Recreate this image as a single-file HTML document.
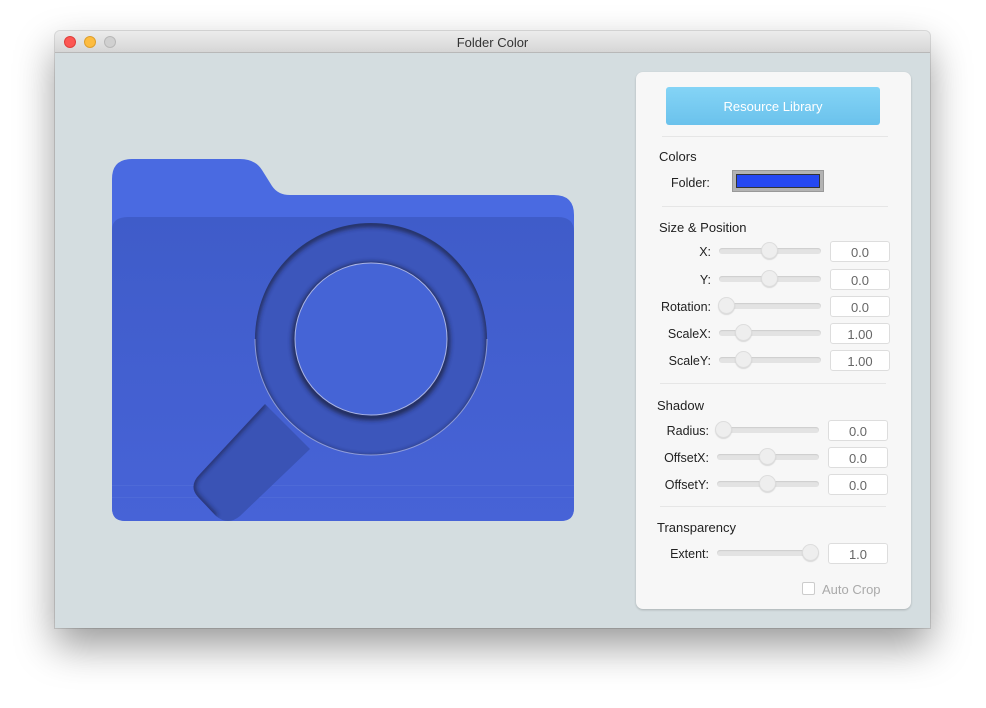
<!DOCTYPE html>
<html><head><meta charset="utf-8"><style>
*{margin:0;padding:0;box-sizing:border-box}
body{width:986px;height:708px;background:#fff;position:relative;overflow:hidden;font-family:"Liberation Sans",sans-serif;font-size:12.5px;color:#222}
.win{position:absolute;left:55px;top:31px;width:875px;height:597px;border-radius:5px 5px 0 0;box-shadow:0 18px 40px rgba(0,0,0,.4),0 0 0 1px rgba(0,0,0,.12);background:#d4dde0;overflow:hidden}
.tb{position:absolute;left:0;top:0;width:875px;height:22px;background:linear-gradient(#ececec,#d6d6d6);border-bottom:1px solid #b8b8b8;text-align:center;line-height:24px;font-size:13px;color:#333}
.dot{position:absolute;top:5px;width:12px;height:12px;border-radius:50%}
.panel{position:absolute;left:636px;top:72px;width:275px;height:537px;background:#f7f7f7;border-radius:7px;box-shadow:0 1px 2px rgba(0,0,0,.2)}
.a{position:absolute}
.lbl{position:absolute;text-align:right;width:100px}
.track{position:absolute;height:6px;border-radius:3px;background:#e3e3e3;box-shadow:inset 0 1px 1px rgba(0,0,0,.1)}
.thumb{position:absolute;width:17px;height:17px;border-radius:50%;background:#eee;border:1px solid #ddd;box-shadow:0 1px 1px rgba(0,0,0,.12)}
.inp{position:absolute;width:60px;height:21px;background:#fff;border:1px solid #ddd;border-radius:3px;text-align:center;line-height:21px;color:#666;font-size:13px}
.sep{position:absolute;height:1px;background:#e6e6e6}
.h{position:absolute;font-size:13px;color:#222}
.panel .lbl,.panel .h{margin-top:1px}
</style></head><body>
<div class="win">
<div class="tb">Folder Color
<div class="dot" style="left:9px;background:#fc5753;border:1px solid #df3e3a"></div>
<div class="dot" style="left:29px;background:#fdbc40;border:1px solid #de9f2c"></div>
<div class="dot" style="left:49px;background:#d0d0d0;border:1px solid #b8b8b8"></div>
</div>
</div>
<svg class="a" style="left:0;top:0" width="986" height="708">
<defs>
<linearGradient id="fg" x1="0" y1="0" x2="0" y2="1"><stop offset="0" stop-color="#3f5cc9"/><stop offset="1" stop-color="#4763d7"/></linearGradient>
<filter id="ins" x="-20%" y="-20%" width="140%" height="140%"><feGaussianBlur stdDeviation="2.5"/></filter>
<clipPath id="ring"><path fill-rule="evenodd" d="M255 339 A116 116 0 1 0 487 339 A116 116 0 1 0 255 339 Z M295 339 A76 76 0 1 1 447 339 A76 76 0 1 1 295 339 Z"/></clipPath>
<clipPath id="hd"><path d="M265 404 L310 449 L240 516 Q228 526 216 516 L198 497 Q188 486 200 474 Z"/></clipPath>
</defs>
<path d="M112 179 Q112 159 132 159 L240 159 Q255 159 262 170 L272 186 Q278 195 290 195 L554 195 Q574 195 574 215 L574 508 Q574 521 561 521 L125 521 Q112 521 112 508 Z" fill="#4a6ae1"/>
<path d="M112 230 Q112 217 128 217 L558 217 Q574 217 574 232 L574 508 Q574 521 561 521 L125 521 Q112 521 112 508 Z" fill="url(#fg)"/>
<rect x="112" y="485" width="462" height="1" fill="#5470d8" opacity=".6"/>
<rect x="112" y="497" width="462" height="1" fill="#5470d8" opacity=".6"/>
<path d="M265 404 L310 449 L240 516 Q228 526 216 516 L198 497 Q188 486 200 474 Z" fill="#3a53b5"/>
<g clip-path="url(#hd)"><path d="M265 404 L200 474 Q188 486 198 497 L216 516" fill="none" stroke="#1e2148" stroke-width="4" filter="url(#ins)" opacity=".8"/></g>
<circle cx="371" cy="339" r="116" fill="#3c56bb"/>
<g clip-path="url(#ring)">
<circle cx="371" cy="341" r="117" fill="none" stroke="#1e2040" stroke-width="5" filter="url(#ins)" opacity=".85"/>
<circle cx="371" cy="341" r="76" fill="none" stroke="#1e2040" stroke-width="6" filter="url(#ins)" opacity=".85"/>
</g>
<circle cx="371" cy="339" r="76" fill="#4564d6" stroke="#a9b4e6" stroke-width="1"/>
<path d="M255 339 A116 116 0 0 0 487 339" fill="none" stroke="#b0bbe8" stroke-width="1" opacity=".7"/>
</svg>
<div class="panel">
<div class="a" style="left:30px;top:15px;width:214px;height:38px;border-radius:3px;background:linear-gradient(#84d4f6,#6bc2ec);color:#fff;text-align:center;line-height:39px;font-size:13px">Resource Library</div>
<div class="sep" style="left:26px;top:64px;width:226px"></div>
<div class="h" style="left:23px;top:76px">Colors</div>
<div class="a" style="left:35px;top:104px">Folder:</div>
<div class="a" style="left:96px;top:98px;width:92px;height:22px;background:#b3b3b3;border:1px solid #999;padding:3px"><div style="width:100%;height:100%;background:#2548f2;border:1px solid #333"></div></div>
<div class="sep" style="left:26px;top:134px;width:226px"></div>
<div class="h" style="left:23px;top:147px">Size &amp; Position</div>

<div class="lbl" style="left:-25px;top:172px">X:</div><div class="track" style="left:83px;top:176px;width:102px"></div><div class="thumb" style="left:125px;top:170px"></div><div class="inp" style="left:194px;top:169px">0.0</div>
<div class="lbl" style="left:-25px;top:200px">Y:</div><div class="track" style="left:83px;top:204px;width:102px"></div><div class="thumb" style="left:125px;top:198px"></div><div class="inp" style="left:194px;top:197px">0.0</div>
<div class="lbl" style="left:-25px;top:227px">Rotation:</div><div class="track" style="left:83px;top:231px;width:102px"></div><div class="thumb" style="left:82px;top:225px"></div><div class="inp" style="left:194px;top:224px">0.0</div>
<div class="lbl" style="left:-25px;top:254px">ScaleX:</div><div class="track" style="left:83px;top:258px;width:102px"></div><div class="thumb" style="left:99px;top:252px"></div><div class="inp" style="left:194px;top:251px">1.00</div>
<div class="lbl" style="left:-25px;top:281px">ScaleY:</div><div class="track" style="left:83px;top:285px;width:102px"></div><div class="thumb" style="left:99px;top:279px"></div><div class="inp" style="left:194px;top:278px">1.00</div>
<div class="sep" style="left:24px;top:311px;width:226px"></div>
<div class="h" style="left:21px;top:325px">Shadow</div>
<div class="lbl" style="left:-27px;top:351px">Radius:</div><div class="track" style="left:81px;top:355px;width:102px"></div><div class="thumb" style="left:79px;top:349px"></div><div class="inp" style="left:192px;top:348px">0.0</div>
<div class="lbl" style="left:-27px;top:378px">OffsetX:</div><div class="track" style="left:81px;top:382px;width:102px"></div><div class="thumb" style="left:123px;top:376px"></div><div class="inp" style="left:192px;top:375px">0.0</div>
<div class="lbl" style="left:-27px;top:405px">OffsetY:</div><div class="track" style="left:81px;top:409px;width:102px"></div><div class="thumb" style="left:123px;top:403px"></div><div class="inp" style="left:192px;top:402px">0.0</div>
<div class="sep" style="left:24px;top:434px;width:226px"></div>
<div class="h" style="left:21px;top:447px">Transparency</div>
<div class="lbl" style="left:-27px;top:474px">Extent:</div><div class="track" style="left:81px;top:478px;width:102px"></div><div class="thumb" style="left:166px;top:472px"></div><div class="inp" style="left:192px;top:471px">1.0</div>
<div class="a" style="left:166px;top:510px;width:13px;height:13px;border:1px solid #ccc;border-radius:2px;background:#fff"></div>
<div class="a" style="left:186px;top:510px;color:#aaa;font-size:13px">Auto Crop</div>
</div>
</body></html>
